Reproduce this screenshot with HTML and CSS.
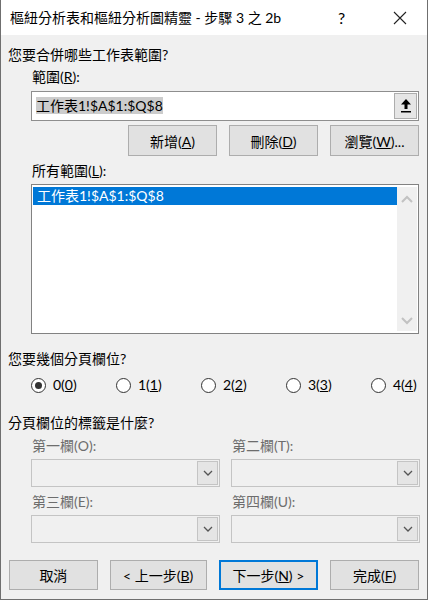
FILE: index.html
```html
<!DOCTYPE html>
<html lang="zh-Hant">
<head>
  <meta charset="UTF-8" />
  <title>樞紐分析表和樞紐分析圖精靈</title>
  <link rel="stylesheet" href="styles.css">
</head>
<body>
  <div class="window">
    <div class="titlebar">
      <span class="title">樞紐分析表和樞紐分析圖精靈 - 步驟 3 之 2b</span>
      <span class="help">?</span>
      <span class="close">
        <svg width="14" height="14" viewBox="0 0 14 14"><path d="M1 1 L13 13 M13 1 L1 13" stroke="#222" stroke-width="1.1" fill="none"/></svg>
      </span>
    </div>

    <div class="content">
      <div class="question">您要合併哪些工作表範圍?</div>

      <div class="indent">
        <div class="label">範圍(<u>R</u>):</div>
        <div class="range-input">
          <span class="range-text"><span class="selected-text">工作表1!$A$1:$Q$8</span></span>
          <span class="collapse-btn">
            <svg width="12" height="16" viewBox="0 0 12 16"><path d="M6 1 L11 6.5 L7.5 6.5 L7.5 11 L4.5 11 L4.5 6.5 L1 6.5 Z" fill="#000"/><rect x="1" y="13" width="10" height="1.5" fill="#000"/></svg>
          </span>
        </div>

        <div class="range-buttons">
          <button class="btn">新增(<u>A</u>)</button>
          <button class="btn">刪除(<u>D</u>)</button>
          <button class="btn">瀏覽(<u>W</u>)...</button>
        </div>

        <div class="label list-label">所有範圍(<u>L</u>):</div>
        <div class="listbox">
          <div class="list-items">
            <div class="list-item selected">工作表1!$A$1:$Q$8</div>
          </div>
          <div class="scrollbar">
            <svg width="12" height="8" viewBox="0 0 12 8"><path d="M1 7 L6 2 L11 7" stroke="#c2c2c2" stroke-width="2" fill="none"/></svg>
            <svg width="12" height="8" viewBox="0 0 12 8"><path d="M1 1 L6 6 L11 1" stroke="#c2c2c2" stroke-width="2" fill="none"/></svg>
          </div>
        </div>
      </div>

      <div class="question q-pages">您要幾個分頁欄位?</div>
      <div class="radios">
        <label class="radio"><span class="dot checked"></span><span>0(<u>0</u>)</span></label>
        <label class="radio"><span class="dot"></span><span>1(<u>1</u>)</span></label>
        <label class="radio"><span class="dot"></span><span>2(<u>2</u>)</span></label>
        <label class="radio"><span class="dot"></span><span>3(<u>3</u>)</span></label>
        <label class="radio"><span class="dot"></span><span>4(<u>4</u>)</span></label>
      </div>

      <div class="question q-labels">分頁欄位的標籤是什麼?</div>
      <div class="fields">
        <div class="field">
          <div class="field-label">第一欄(O):</div>
          <div class="combo"><span class="combo-btn"><svg width="10" height="6" viewBox="0 0 10 6"><path d="M1 1 L5 5 L9 1" stroke="#555" stroke-width="1.3" fill="none"/></svg></span></div>
        </div>
        <div class="field">
          <div class="field-label">第二欄(T):</div>
          <div class="combo"><span class="combo-btn"><svg width="10" height="6" viewBox="0 0 10 6"><path d="M1 1 L5 5 L9 1" stroke="#555" stroke-width="1.3" fill="none"/></svg></span></div>
        </div>
        <div class="field">
          <div class="field-label">第三欄(E):</div>
          <div class="combo"><span class="combo-btn"><svg width="10" height="6" viewBox="0 0 10 6"><path d="M1 1 L5 5 L9 1" stroke="#555" stroke-width="1.3" fill="none"/></svg></span></div>
        </div>
        <div class="field">
          <div class="field-label">第四欄(U):</div>
          <div class="combo"><span class="combo-btn"><svg width="10" height="6" viewBox="0 0 10 6"><path d="M1 1 L5 5 L9 1" stroke="#555" stroke-width="1.3" fill="none"/></svg></span></div>
        </div>
      </div>

      <div class="footer">
        <button class="btn">取消</button>
        <button class="btn">&lt; 上一步(<u>B</u>)</button>
        <button class="btn focused">下一步(<u>N</u>) &gt;</button>
        <button class="btn">完成(<u>F</u>)</button>
      </div>
    </div>
  </div>
</body>
</html>
```

FILE: styles.css
```css
body {
  margin: 0;
  font-family: "Lato", "Noto Sans CJK TC", sans-serif;
  font-size: 14px;
  color: #000;
  background: #f0f0f0;
}

.window {
  width: 428px;
  height: 600px;
  box-sizing: border-box;
  border: 1px solid #6f6f6f;
  border-top: none;
  background: #f0f0f0;
  display: flex;
  flex-direction: column;
}

.titlebar {
  height: 35px;
  background: #fff;
  display: flex;
  align-items: center;
  padding-left: 9px;
}

.title {
  flex: 1;
  font-size: 14px;
  line-height: 20px;
}

.help {
  width: 20px;
  font-size: 16px;
  margin-right: 35px;
}

.close {
  display: flex;
  margin-right: 20px;
}

.content {
  padding: 10px 8px 0 7px;
  line-height: 20px;
}

.indent {
  padding-left: 23px;
}

.label {
  margin-top: 2px;
  padding-left: 1px;
}

.range-input {
  margin-top: 4px;
  height: 30px;
  box-sizing: border-box;
  border: 1px solid #8e8e8e;
  background: #fff;
  display: flex;
  align-items: center;
}

.range-text {
  flex: 1;
  padding-left: 4px;
}

.selected-text {
  background: #cccccc;
}

.collapse-btn {
  width: 23px;
  height: 26px;
  margin-right: 1px;
  box-sizing: border-box;
  border: 1px solid #adadad;
  background: #e6e6e6;
  display: flex;
  align-items: center;
  justify-content: center;
}

.range-buttons {
  margin-top: 4px;
  display: flex;
  justify-content: flex-end;
  gap: 12px;
}

.btn {
  font-family: inherit;
  font-size: 14px;
  color: #000;
  background: #e1e1e1;
  border: 1px solid #adadad;
  width: 89px;
  height: 31px;
  padding: 0;
}

.list-label {
  margin-top: 5px;
}

.listbox {
  margin-top: 3px;
  height: 150px;
  box-sizing: border-box;
  border: 1px solid #828282;
  background: #fff;
  display: flex;
  padding: 2px 1px 2px 1px;
}

.list-items {
  flex: 1;
}

.list-item {
  height: 18px;
  line-height: 18px;
  padding-left: 4px;
}

.list-item.selected {
  background: #0078d7;
  color: #fff;
}

.scrollbar {
  width: 20px;
  background: #f0f0f0;
  display: flex;
  flex-direction: column;
  align-items: center;
  justify-content: space-between;
  padding: 8px 0 6px;
}

.q-pages {
  margin-top: 15px;
}

.radios {
  margin-top: 6px;
  display: flex;
  padding-left: 23px;
}

.radio {
  width: 85px;
  display: flex;
  align-items: center;
  gap: 7px;
}

.radio:last-child {
  width: auto;
}

.dot {
  width: 15px;
  height: 15px;
  box-sizing: border-box;
  border: 1px solid #333;
  border-radius: 50%;
  background: #fff;
  display: flex;
  align-items: center;
  justify-content: center;
}

.dot.checked::after {
  content: "";
  width: 7px;
  height: 7px;
  border-radius: 50%;
  background: #333;
}

.q-labels {
  margin-top: 18px;
}

.fields {
  margin-top: 3px;
  padding-left: 23px;
  display: grid;
  grid-template-columns: 189px 189px;
  column-gap: 11px;
  row-gap: 5px;
}

.field-label {
  color: #6d6d6d;
  padding-left: 1px;
}

.combo {
  margin-top: 3px;
  height: 28px;
  box-sizing: border-box;
  border: 1px solid #c4c4c4;
  background: #f0f0f0;
  display: flex;
  justify-content: flex-end;
  padding: 1px;
}

.combo-btn {
  width: 21px;
  box-sizing: border-box;
  border: 1px solid #c4c4c4;
  background: #e5e5e5;
  display: flex;
  align-items: center;
  justify-content: center;
}

.footer {
  margin-top: 17px;
  display: flex;
  gap: 12px;
  padding-left: 1px;
}

.footer .btn {
  height: 30px;
}

.footer .btn:nth-child(2) {
  width: 97px;
}

.footer .btn:nth-child(3) {
  width: 100px;
}

.footer .btn.focused {
  border: 2px solid #0078d7;
}
```
